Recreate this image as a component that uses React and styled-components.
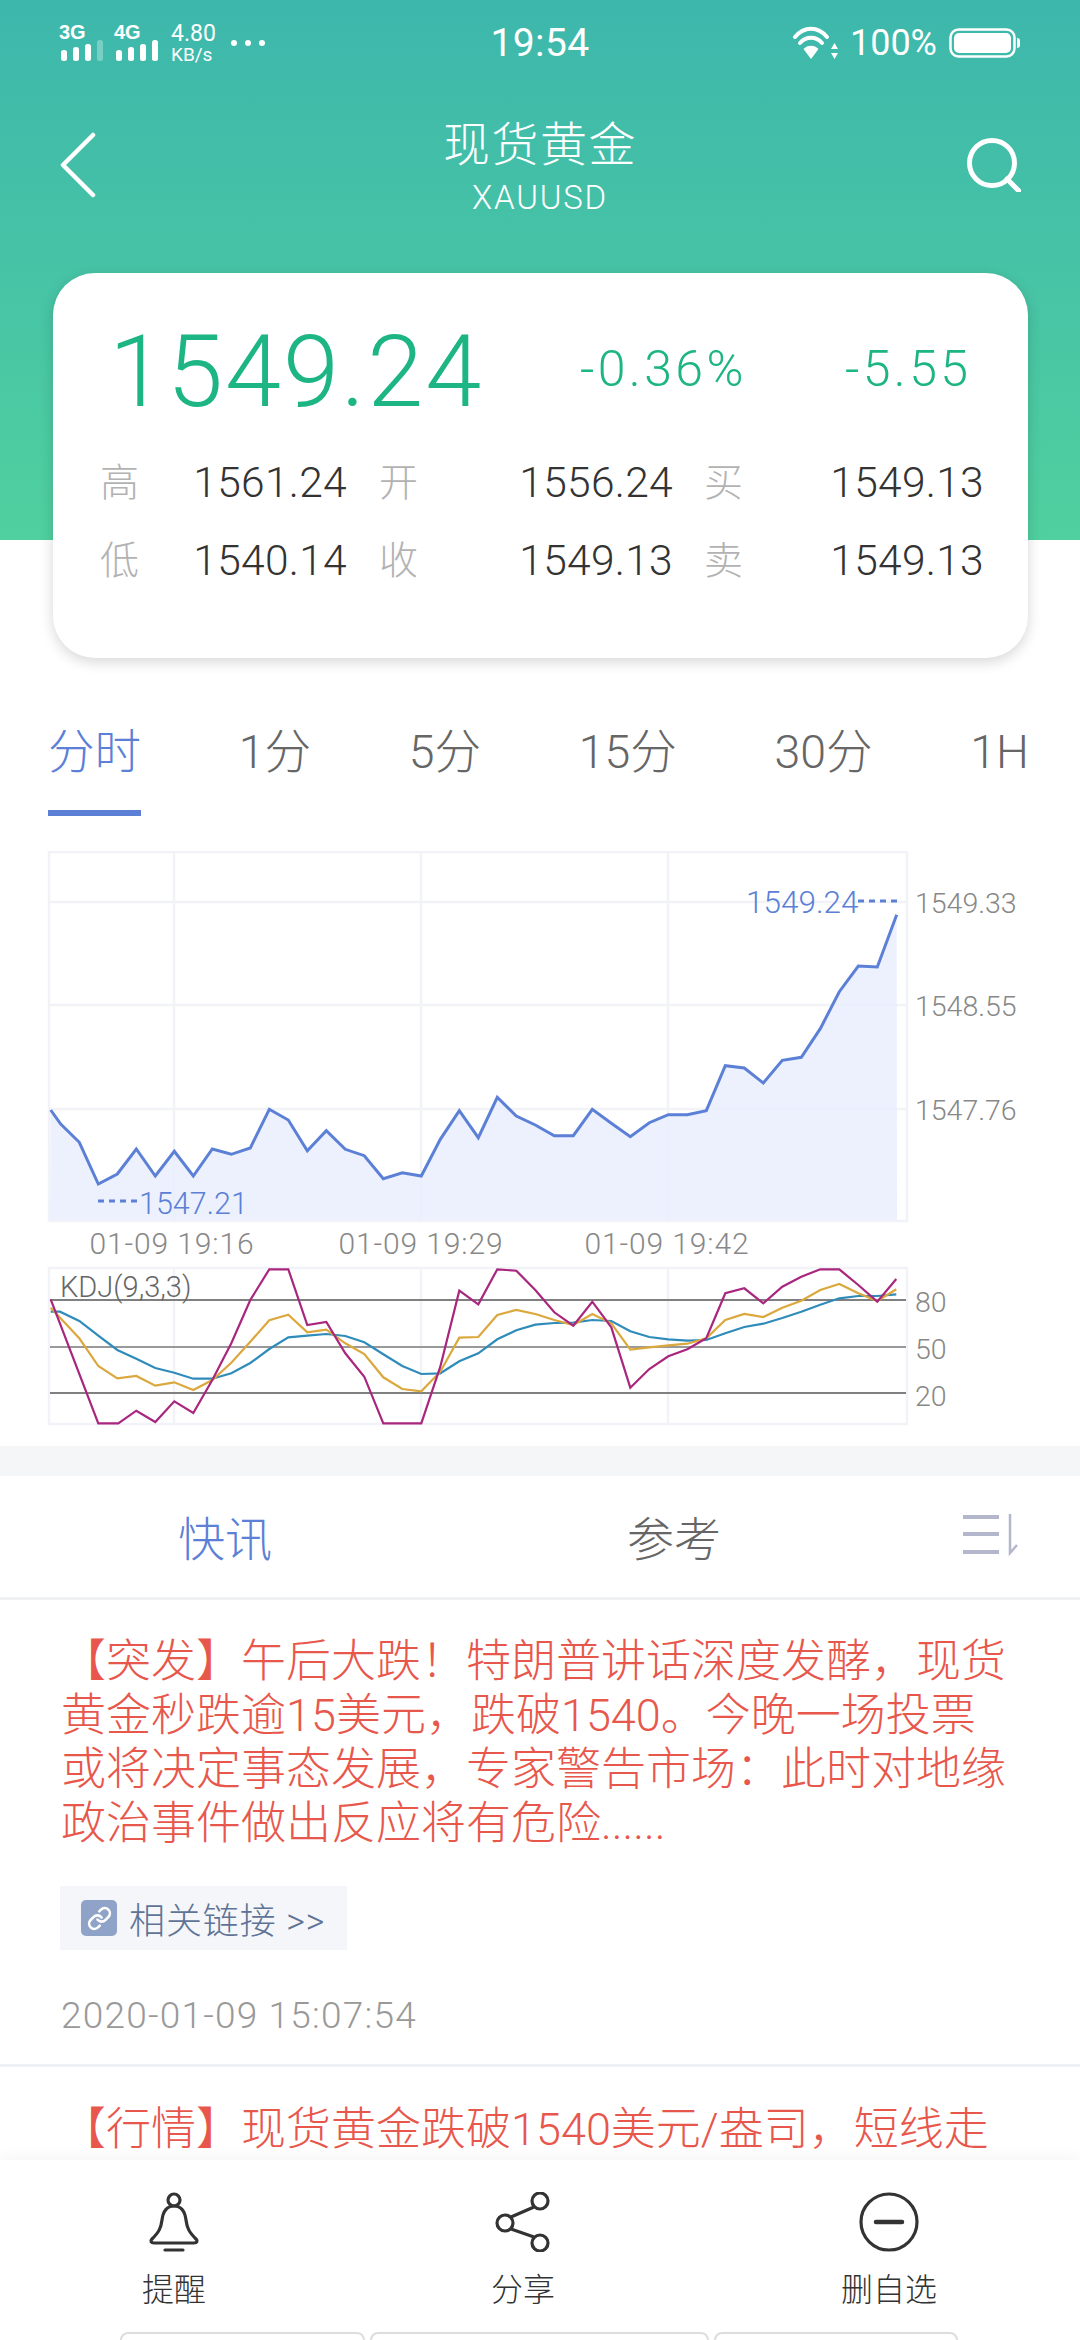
import React from 'react';
import styled, { createGlobalStyle } from 'styled-components';
import { Link as LinkIcon } from 'lucide-react';

const Global = createGlobalStyle`
  html, body { margin: 0; padding: 0; background: #fff; }
  * { box-sizing: border-box; }
  body { font-family: Roboto, "Noto Sans CJK SC", sans-serif; font-weight: 300; }
`;

const Page = styled.div`
  position: relative; width: 1080px; height: 2340px; overflow: hidden; background: #fff;
`;
const Top = styled.section`
  background: linear-gradient(180deg, #3db7ac 0%, #50d09f 100%) top / 100% 540px no-repeat;
  color: #fff;
`;
const StatusBar = styled.div`
  display: grid; grid-template-columns: 1fr auto 1fr; align-items: center;
  height: 86px; padding: 0 60px;
`;
const StatusLeft = styled.div`display: flex; align-items: center; gap: 11px;`;
const StatusRight = styled.div`display: flex; align-items: center; justify-content: flex-end; gap: 12px;`;
const NetGroup = styled.div`display: flex; flex-direction: column; align-items: flex-start; width: 44px;`;
const NetName = styled.span`
  font: 700 20px/18px "Liberation Sans", sans-serif; height: 17px; margin: -2px 0 0 -1px;
`;
const Speed = styled.div`display: flex; flex-direction: column; margin-left: 1px;`;
const SpeedValue = styled.span`font-size: 23px; line-height: 23px; font-weight: 400;`;
const SpeedUnit = styled.span`font-size: 19px; line-height: 19px; font-weight: 400;`;
const Dots = styled.div`
  display: flex; gap: 8px; margin-left: 4px;
`;
const Dot = styled.i`display: block; width: 6px; height: 6px; border-radius: 50%; background: #fff;`;
const Clock = styled.span`font-size: 39px; font-weight: 400; letter-spacing: 0.4px;`;
const Battery = styled.span`font-size: 36px; font-weight: 400;`;

const Nav = styled.header`
  display: grid; grid-template-columns: 1fr auto 1fr; height: 187px; padding: 0 60px;
`;
const BackBtn = styled.svg`margin-top: 46px;`;
const SearchBtn = styled.svg`margin-top: 52px; justify-self: end; margin-right: -1px;`;
const TitleBlock = styled.div`text-align: center; padding-top: 29px;`;
const Title = styled.div`font-size: 47px; line-height: 60px; letter-spacing: 1.5px;`;
const Subtitle = styled.div`font-size: 33px; line-height: 40px; margin-top: 3px; letter-spacing: 1.8px;`;

const Card = styled.div`
  width: 975px; height: 385px; margin-left: 53px; background: #fff; border-radius: 42px;
  box-shadow: 0 4px 14px rgba(0, 0, 0, .16); color: #333;
`;
const PriceRow = styled.div`
  display: grid; grid-template-columns: 527px 265px 1fr; align-items: center;
  height: 170px; padding-top: 26px;
`;
const BigPrice = styled.div`
  font-size: 101px; line-height: 1; color: #1db584; padding-left: 56px; letter-spacing: 2px;
`;
const Change = styled.div`
  font-size: 50px; color: #1db584; letter-spacing: 3.4px; margin-top: -4px;
`;
const QuoteGrid = styled.div`
  display: grid; grid-template-columns: 38px 209px 70px 256px 69px 242px;
  grid-auto-rows: 78px; align-items: center; padding-left: 47px;
`;
const QuoteLabel = styled.span`
  font-size: 39px; color: #b2b2b2; justify-self: end; width: 38px; margin-top: -6px;
`;
const QuoteValue = styled.span`font-size: 42.5px; color: #333; text-align: right; letter-spacing: .3px;`;

const Periods = styled.nav`
  display: flex; justify-content: space-between; margin-top: 30px; padding: 0 51px 0 48px;
`;
const Period = styled.div`
  height: 128px; line-height: 128px; font-size: 46.5px; white-space: nowrap;
  color: ${p => (p.$active ? '#5b80d6' : '#666')};
  border-bottom: 6px solid ${p => (p.$active ? '#5b80d6' : 'transparent')};
`;

const Chart = styled.svg`
  display: block; width: 1080px; margin-top: ${p => p.$top || 0}px;
  font-family: Roboto, sans-serif; font-weight: 300;
`;

const SectionGap = styled.div`height: 30px; background: #f5f6f8;`;
const NewsTabs = styled.div`
  display: grid; grid-template-columns: 450px 448px 1fr; align-items: center;
  height: 124px; padding-bottom: 3px; border-bottom: 3px solid #f0f1f3;
`;
const NewsTab = styled.div`
  text-align: center; font-size: 47px; font-weight: 300;
  color: ${p => (p.$active ? '#5b80d6' : '#666')};
`;
const SortIcon = styled.svg`margin-left: 65px;`;
const NewsItem = styled.article`
  padding: ${p => p.$first ? '35px' : '36px'} 60px 26px 61px;
  border-bottom: 3px solid #eef1f5;
`;
const Headline = styled.div`
  font-size: 45px; line-height: 54px; color: #e8574c; font-weight: 300; white-space: nowrap;
`;
const LinkChip = styled.div`
  display: inline-flex; align-items: center; gap: 12px; height: 64px; margin: 35px 0 0 -1px;
  padding: 0 22px 0 21px; background: #f4f6f9; color: #5f7396; font-size: 36px; vertical-align: top;
  letter-spacing: .9px; white-space: nowrap;
`;
const LinkBadge = styled.span`
  display: flex; align-items: center; justify-content: center; width: 36px; height: 36px;
  border-radius: 5px; background: #8fa3c8; color: #fff;
`;
const Stamp = styled.div`
  margin: 44px 0 0 0; font-size: 37px; line-height: 44px; color: #999; letter-spacing: 1.2px;
`;

const Toolbar = styled.footer`
  position: absolute; left: 0; right: 0; bottom: 0; height: 180px; overflow: hidden;
  background: #fff; box-shadow: 0 -6px 12px rgba(0, 0, 0, .03);
`;
const ToolGrid = styled.div`
  display: grid; grid-template-columns: 348px 350px 382px; padding-top: 32px;
`;
const ToolItem = styled.div`display: flex; flex-direction: column; align-items: center;`;
const ToolLabel = styled.span`
  margin-top: 18px; font-size: 32px; line-height: 40px; color: #333; font-weight: 300;
`;
const Stubs = styled.div`display: flex; gap: 5px; margin-top: 22px; padding-left: 120px;`;
const Stub = styled.div`
  height: 20px; width: ${p => p.$w}px; background: #fff;
  border: 2px solid #ddd; border-radius: 8px;
`;

const Z3 = (x, y) => [30 + x / 3, 840 + y / 3];
const Z4 = (x, y) => [540 + x / 3, 840 + y / 3];
const K5 = (x, y) => [30 + x / 3, 1240 + y / 3];
const K6 = (x, y) => [540 + x / 3, 1240 + y / 3];
const toPts = arr => arr.map(p => p.map(n => n.toFixed(1)).join(',')).join(' ');

const line = [
  ...[[62,810],[92,852],[148,907],[205,1032],[262,1002],[319,927],[376,1008],[433,934],[490,1008],[547,927],[604,943],[661,924],[718,808],[775,840],[832,932],[889,872],[946,928],[1003,947],[1060,1016],[1117,998],[1174,1008],[1231,898],[1288,812],[1345,893],[1402,772],[1459,828],[1516,855]].map(p => Z3(...p)),
  ...[[43,887],[100,887],[157,808],[214,850],[271,890],[328,848],[385,824],[442,824],[499,812],[556,677],[613,684],[670,729],[727,661],[784,652],[841,566],[898,455],[955,378],[1012,381],[1070,224]].map(p => Z4(...p)),
];
const area = [...line, [897, 1220], [50, 1220]];

const series = (a, b) => [...a.map(p => K5(...p)), ...b.map(p => K6(...p))];
const J = series(
  [[62,178],[205,550],[265,550],[319,512],[376,546],[433,484],[490,519],[547,420],[604,310],[661,180],[718,88],[775,88],[832,255],[889,246],[946,340],[1003,410],[1060,550],[1117,550],[1174,550],[1231,380],[1288,152],[1345,193],[1402,88],[1459,92]],
  [[-14,150],[43,217],[100,257],[157,185],[214,262],[271,443],[328,387],[385,349],[442,328],[499,295],[556,160],[613,145],[670,190],[727,140],[784,110],[841,88],[898,88],[955,135],[1012,185],[1069,117]]
);
const K = series(
  [[62,203],[148,295],[205,378],[262,415],[319,408],[376,437],[433,427],[490,450],[547,420],[604,368],[661,305],[718,241],[775,224],[832,277],[889,269],[946,310],[1003,342],[1060,412],[1117,447],[1174,454],[1231,395],[1288,293],[1345,291],[1402,225],[1459,210]],
  [[-14,222],[43,240],[100,255],[157,222],[214,250],[271,329],[328,322],[385,316],[442,311],[499,295],[556,240],[613,222],[670,231],[727,203],[784,182],[841,150],[898,132],[955,160],[1012,183],[1069,148]]
);
const D = series(
  [[62,215],[90,215],[148,243],[205,287],[262,330],[319,356],[376,384],[433,398],[490,416],[547,416],[604,400],[661,369],[718,327],[775,292],[832,287],[889,282],[946,288],[1003,307],[1060,343],[1117,378],[1174,402],[1231,400],[1288,364],[1345,340],[1402,298],[1459,271]],
  [[-14,254],[43,249],[100,248],[157,240],[214,243],[271,274],[328,291],[385,298],[442,302],[499,300],[556,280],[613,261],[670,251],[727,234],[784,215],[841,194],[898,175],[955,168],[1012,168],[1069,163]]
);

const GRID = '#f1f3f8';
const BLUE = '#5b80d6';

function Bars({ dimLast }) {
  return (
    <svg width="44" height="21" viewBox="0 0 44 21">
      <rect x="1" y="10" width="6" height="11" rx="2.5" fill="#fff" />
      <rect x="13" y="7" width="6" height="14" rx="2.5" fill="#fff" />
      <rect x="25" y="4" width="6" height="17" rx="2.5" fill="#fff" />
      <rect x="37" y="0" width="6" height="21" rx="2.5" fill="#fff" opacity={dimLast ? 0.3 : 1} />
    </svg>
  );
}

function Wifi() {
  return (
    <svg width="45" height="34" viewBox="0 0 45 34" fill="none" stroke="#fff" strokeWidth="4">
      <path d="M2 11C11 0 25 0 34 11" strokeLinecap="round" />
      <path d="M7 17C13 10 23 10 29 17" strokeLinecap="round" />
      <path d="M18 33L10.5 23C14 18.5 22 18.5 25.5 23Z" fill="#fff" stroke="none" />
      <path d="M41.5 17l-3.5 6h7zM41.5 33l-3.5-6h7z" fill="#fff" stroke="none" />
    </svg>
  );
}

function BatteryIcon() {
  return (
    <svg width="71" height="30" viewBox="0 0 71 30">
      <rect x="1.5" y="1.5" width="64" height="27" rx="8" fill="none" stroke="#fff" strokeWidth="2.5" />
      <rect x="5" y="5" width="57" height="20" rx="5" fill="#fff" />
      <path d="M68 10c2 0 3 1 3 3v4c0 2-1 3-3 3z" fill="#fff" />
    </svg>
  );
}

function PriceChart() {
  return (
    <Chart $top={35} height="414" viewBox="0 851 1080 414">
      <g stroke={GRID} strokeWidth="2.5" fill="none">
        <rect x="49" y="852" width="858" height="369" />
        <path d="M50 902H906M50 1005H906M50 1109H906M174 852V1220M421 852V1220M668 852V1220" />
      </g>
      <polygon points={toPts(area)} fill="#e7edfc" opacity=".8" />
      <polyline points={toPts(line)} fill="none" stroke={BLUE} strokeWidth="3" strokeLinejoin="miter" />
      <path d="M98 1201H138M858 901H897" stroke={BLUE} strokeWidth="3" strokeDasharray="6 5" />
      <text x="139" y="1214" fill={BLUE} fontSize="30.5">1547.21</text>
      <text x="746" y="913" fill={BLUE} fontSize="31.5">1549.24</text>
      <g fill="#888" fontSize="28.5">
        <text x="915" y="913">1549.33</text>
        <text x="915" y="1016">1548.55</text>
        <text x="915" y="1120">1547.76</text>
      </g>
      <g fill="#888" fontSize="30" textAnchor="middle" letterSpacing=".9">
        <text x="172" y="1254">01-09 19:16</text>
        <text x="421" y="1254">01-09 19:29</text>
        <text x="667" y="1254">01-09 19:42</text>
      </g>
    </Chart>
  );
}

function KdjChart() {
  return (
    <Chart height="181" viewBox="0 1265 1080 181">
      <g stroke={GRID} strokeWidth="2.5" fill="none">
        <rect x="49" y="1268" width="858" height="156" />
        <path d="M174 1268V1424M421 1268V1424M668 1268V1424" />
      </g>
      <path d="M50 1300H906M50 1393H906" stroke="#808080" strokeWidth="2" />
      <path d="M50 1347H906" stroke="#999" strokeWidth="2" />
      <text x="60" y="1297" fill="#666" fontSize="29">KDJ(9,3,3)</text>
      <polyline points={toPts(D)} fill="none" stroke="#2f8cba" strokeWidth="2.2" />
      <polyline points={toPts(K)} fill="none" stroke="#dba83d" strokeWidth="2.2" />
      <polyline points={toPts(J)} fill="none" stroke="#a8267e" strokeWidth="2.2" />
      <g fill="#888" fontSize="28.5">
        <text x="915" y="1312">80</text>
        <text x="915" y="1359">50</text>
        <text x="915" y="1406">20</text>
      </g>
    </Chart>
  );
}

const quotes = [
  ['高', '1561.24', '开', '1556.24', '买', '1549.13'],
  ['低', '1540.14', '收', '1549.13', '卖', '1549.13'],
];
const periods = ['分时', '1分', '5分', '15分', '30分', '1H'];

export default function App() {
  return (
    <Page>
      <Global />
      <Top>
        <StatusBar>
          <StatusLeft>
            <NetGroup><NetName>3G</NetName><Bars dimLast /></NetGroup>
            <NetGroup><NetName>4G</NetName><Bars /></NetGroup>
            <Speed><SpeedValue>4.80</SpeedValue><SpeedUnit>KB/s</SpeedUnit></Speed>
            <Dots><Dot /><Dot /><Dot /></Dots>
          </StatusLeft>
          <Clock>19:54</Clock>
          <StatusRight>
            <Wifi />
            <Battery>100%</Battery>
            <BatteryIcon />
          </StatusRight>
        </StatusBar>
        <Nav>
          <BackBtn width="36" height="66" viewBox="0 0 36 66" fill="none" stroke="#fff" strokeWidth="4.5" strokeLinecap="round" strokeLinejoin="round">
            <path d="M33 3L3 33L33 63" />
          </BackBtn>
          <TitleBlock>
            <Title>现货黄金</Title>
            <Subtitle>XAUUSD</Subtitle>
          </TitleBlock>
          <SearchBtn width="54" height="54" viewBox="0 0 54 54" fill="none" stroke="#fff" strokeWidth="5" strokeLinecap="round">
            <circle cx="25" cy="25" r="22.5" />
            <path d="M40 41L52 53" />
          </SearchBtn>
        </Nav>
        <Card>
          <PriceRow>
            <BigPrice>1549.24</BigPrice>
            <Change>-0.36%</Change>
            <Change>-5.55</Change>
          </PriceRow>
          <QuoteGrid>
            {quotes.flat().map((t, i) =>
              i % 2 === 0
                ? <QuoteLabel key={i}>{t}</QuoteLabel>
                : <QuoteValue key={i}>{t}</QuoteValue>
            )}
          </QuoteGrid>
        </Card>
      </Top>

      <Periods>
        {periods.map((p, i) => <Period key={p} $active={i === 0}>{p}</Period>)}
      </Periods>

      <PriceChart />
      <KdjChart />
      <SectionGap />

      <NewsTabs>
        <NewsTab $active>快讯</NewsTab>
        <NewsTab>参考</NewsTab>
        <SortIcon width="56" height="42" viewBox="0 0 56 42" fill="none" stroke="#b4b6cc">
          <path d="M0 3H36M0 20H36M0 38H36" strokeWidth="4" />
          <path d="M47 0V39L54 31" strokeWidth="2.5" />
        </SortIcon>
      </NewsTabs>

      <NewsItem $first>
        <Headline>【突发】午后大跌！特朗普讲话深度发酵，现货</Headline>
        <Headline>黄金秒跌逾15美元，跌破1540。今晚一场投票</Headline>
        <Headline>或将决定事态发展，专家警告市场：此时对地缘</Headline>
        <Headline>政治事件做出反应将有危险......</Headline>
        <LinkChip>
          <LinkBadge><LinkIcon size={25} strokeWidth={2.5} /></LinkBadge>
          相关链接 &gt;&gt;
        </LinkChip>
        <Stamp>2020-01-09 15:07:54</Stamp>
      </NewsItem>
      <NewsItem>
        <Headline>【行情】现货黄金跌破1540美元/盎司，短线走</Headline>
      </NewsItem>

      <Toolbar>
        <ToolGrid>
          <ToolItem>
            <svg width="56" height="60" viewBox="0 0 56 60" fill="none" stroke="#333" strokeWidth="3.2" strokeLinecap="round">
              <circle cx="28" cy="8" r="6" />
              <path d="M28 14c-8 0-11 6-12 14-1 8-3 12-10 19-2 2-1 4 2 4h40c3 0 4-2 2-4-7-7-9-11-10-19-1-8-4-14-12-14z" />
              <path d="M19 58H37" />
            </svg>
            <ToolLabel>提醒</ToolLabel>
          </ToolItem>
          <ToolItem>
            <svg width="56" height="60" viewBox="0 0 56 60" fill="none" stroke="#333" strokeWidth="3.2">
              <circle cx="45" cy="9" r="8" />
              <circle cx="10" cy="31" r="8" />
              <circle cx="45" cy="51" r="8" />
              <path d="M16 25L39 15M16 37L39 45" />
            </svg>
            <ToolLabel>分享</ToolLabel>
          </ToolItem>
          <ToolItem>
            <svg width="60" height="60" viewBox="0 0 60 60" fill="none" stroke="#333" strokeWidth="3.2" strokeLinecap="round">
              <circle cx="30" cy="30" r="28" />
              <path d="M17 30H43" strokeWidth="4.5" />
            </svg>
            <ToolLabel>删自选</ToolLabel>
          </ToolItem>
        </ToolGrid>
        <Stubs>
          <Stub $w={245} />
          <Stub $w={339} />
          <Stub $w={244} />
        </Stubs>
      </Toolbar>
    </Page>
  );
}
